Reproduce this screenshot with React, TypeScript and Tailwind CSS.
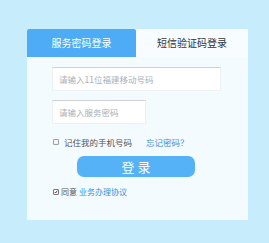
export default function App() {
  const font = { fontFamily: '"Noto Sans CJK SC", "Noto Sans", sans-serif' };
  return (
    <div className="w-[269px] h-[243px] bg-[#c7ecfc] pt-[29px] pl-[27px]" style={font}>
      <div className="w-[221px] h-[191px] bg-[#f3fbff] flex flex-col">
        {/* tabs */}
        <div className="flex h-[28px]">
          <div className="w-[109px] bg-[#4eacf6] rounded-t-[2px] flex items-center justify-center text-[10px] leading-none text-white">服务密码登录</div>
          <div className="flex-1 bg-[#f6fcff] flex items-center justify-center text-[10px] leading-none text-[#333]">短信验证码登录</div>
        </div>

        {/* inputs */}
        <div className="ml-[25px] mt-[10px] w-[169px] h-[24px] bg-white border border-[#eef1f3] border-t-[#cdd1d4] flex items-center pl-[6px] text-[8.5px] leading-none text-[#aab0b5]">请输入11位福建移动号码</div>
        <div className="ml-[25px] mt-[9px] w-[94px] h-[24px] bg-white border border-[#eef1f3] border-t-[#cdd1d4] flex items-center pl-[6px] text-[8.5px] leading-none text-[#aab0b5]">请输入服务密码</div>

        {/* remember row */}
        <div className="ml-[26px] mt-[13px] flex items-center h-[10px] text-[8.5px] leading-none">
          <span className="w-[6px] h-[6px] border border-[#9aa0a4] bg-[#f4f4f4] rounded-[1px]" />
          <span className="ml-[5px] text-[#555]">记住我的手机号码</span>
          <span className="ml-[14px] text-[#3a8fdc]">忘记密码？</span>
        </div>

        {/* login button */}
        <div className="ml-[50px] mt-[9px] w-[118px] h-[21px] bg-[#55b2f6] rounded-[7px] flex items-center justify-center text-[13px] leading-none text-white">登&nbsp;录</div>

        {/* agree row */}
        <div className="ml-[26px] mt-[10px] flex items-center h-[10px] text-[8px] leading-none">
          <span className="w-[6px] h-[6px] border border-[#777] bg-white rounded-[1px] flex items-center justify-center">
            <svg width="6" height="6" viewBox="0 0 6 6"><path d="M1 3 L2.5 4.5 L5 1" stroke="#222" strokeWidth="1.2" fill="none" /></svg>
          </span>
          <span className="ml-[2px] text-[#555]">同意</span>
          <span className="ml-[2px] text-[#3a8fdc]">业务办理协议</span>
        </div>
      </div>
    </div>
  );
}
